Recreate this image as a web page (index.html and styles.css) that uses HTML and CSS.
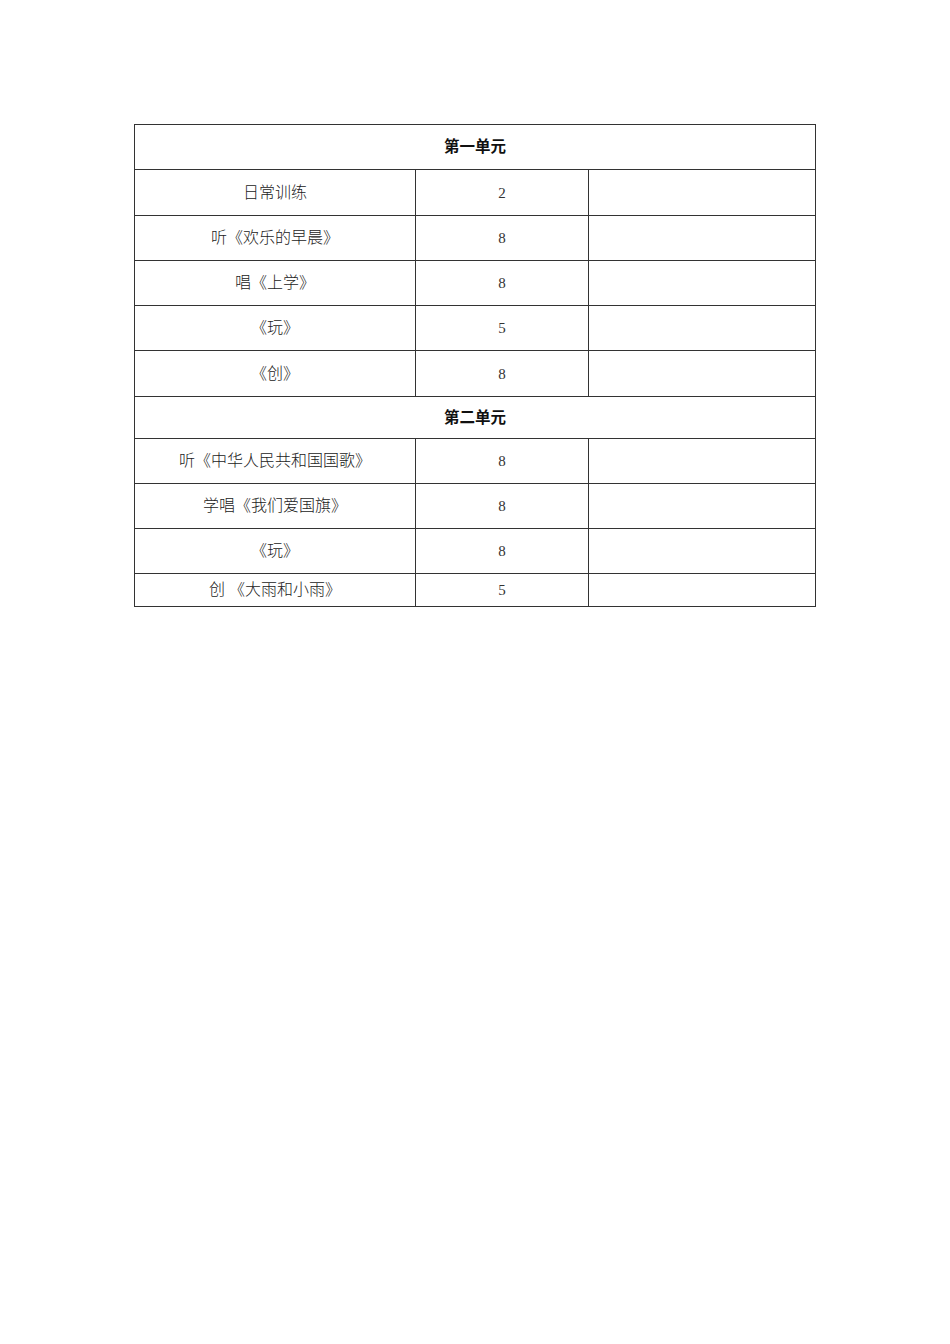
FILE: index.html
```html
<!DOCTYPE html>
<html lang="zh">
<head>
<meta charset="utf-8">
<link rel="stylesheet" href="styles.css">
</head>
<body>
<table class="plan">
  <colgroup><col class="c1"><col class="c2"><col class="c3"></colgroup>
  <tr class="r45"><td colspan="3" class="unit">第一单元</td></tr>
  <tr class="r46"><td>日常训练</td><td class="num">2</td><td></td></tr>
  <tr class="r45"><td>听《欢乐的早晨》</td><td class="num">8</td><td></td></tr>
  <tr class="r45"><td>唱《上学》</td><td class="num">8</td><td></td></tr>
  <tr class="r45"><td>《玩》</td><td class="num">5</td><td></td></tr>
  <tr class="r46"><td>《创》</td><td class="num">8</td><td></td></tr>
  <tr class="r42"><td colspan="3" class="unit">第二单元</td></tr>
  <tr class="r45"><td>听《中华人民共和国国歌》</td><td class="num">8</td><td></td></tr>
  <tr class="r45"><td>学唱《我们爱国旗》</td><td class="num">8</td><td></td></tr>
  <tr class="r45"><td>《玩》</td><td class="num">8</td><td></td></tr>
  <tr class="r33"><td>创 《大雨和小雨》</td><td class="num">5</td><td></td></tr>
</table>
</body>
</html>
```
FILE: styles.css
```css
html, body {
  margin: 0;
  padding: 0;
  background: #fff;
}
body {
  padding: 124px 0 0 134px;
  font-family: "Liberation Serif", "Noto Sans CJK SC", serif;
  color: #222;
}
.plan {
  border-collapse: collapse;
  table-layout: fixed;
  width: 681px;
}
.c1 { width: 281px; }
.c2 { width: 173px; }
.c3 { width: 227px; }
.plan td {
  border: 1px solid #333;
  padding: 0;
  text-align: center;
  vertical-align: middle;
  font-size: 16px;
  font-weight: 300;
  line-height: 18px;
}
.plan td.num {
  font-size: 15px;
  font-weight: 400;
  color: #333;
}
.plan td.unit {
  font-size: 15.5px;
  font-weight: 700;
  color: #111;
}
.r45 td { height: 44px; }
.r46 td { height: 45px; }
.r42 td { height: 41px; }
.r33 td { height: 32px; }
```
